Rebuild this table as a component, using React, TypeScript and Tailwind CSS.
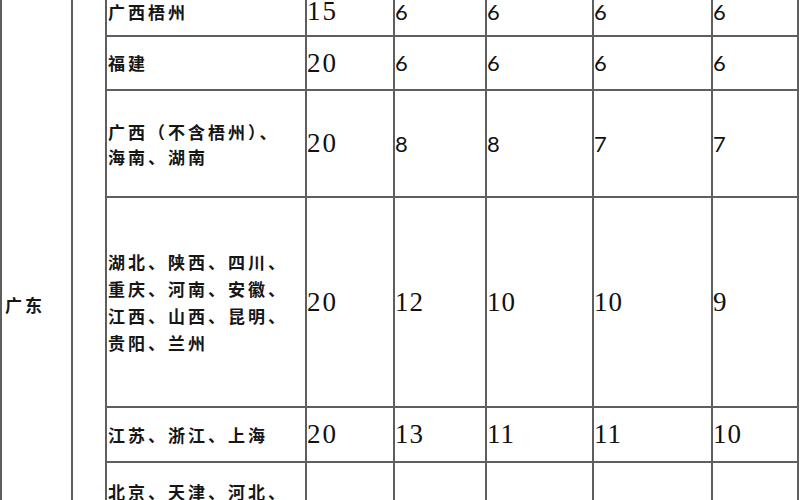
const cjk = "font-['Noto_Sans_CJK_SC',sans-serif] font-bold text-[17px] tracking-[3px] text-[#161616]";
const serifNum = "font-['Liberation_Serif',serif] text-[27px] tracking-[1px] text-[#111]";
const sansNum = "font-['Lato',sans-serif] text-[22px] text-[#111]";

type Row = {
  region: string[];
  leading: string;
  base: string;
  rates: string[];
  rateFont: 'serif' | 'sans';
  top?: boolean;
};

const rows: Row[] = [
  { region: ['广西梧州'], leading: 'leading-[22px]', base: '15', rates: ['6', '6', '6', '6'], rateFont: 'sans' },
  { region: ['福建'], leading: 'leading-[22px]', base: '20', rates: ['6', '6', '6', '6'], rateFont: 'sans' },
  {
    region: ['广西（不含梧州）、', '海南、湖南'],
    leading: 'leading-[25px]',
    base: '20',
    rates: ['8', '8', '7', '7'],
    rateFont: 'sans',
  },
  {
    region: ['湖北、陕西、四川、', '重庆、河南、安徽、', '江西、山西、昆明、', '贵阳、兰州'],
    leading: 'leading-[27px]',
    base: '20',
    rates: ['12', '10', '10', '9'],
    rateFont: 'serif',
  },
  { region: ['江苏、浙江、上海'], leading: 'leading-[22px]', base: '20', rates: ['13', '11', '11', '10'], rateFont: 'serif' },
  {
    region: ['北京、天津、河北、', '辽宁、吉林'],
    leading: 'leading-[26px]',
    base: '',
    rates: ['', '', '', ''],
    rateFont: 'serif',
    top: true,
  },
];

export default function App() {
  return (
    <div className="h-[500px] w-[800px] overflow-hidden bg-white">
      <div className="-mt-[12px] grid w-[799px] grid-cols-[69px_32px_198px_86px_90px_105px_117px_84px] grid-rows-[47px_52px_105px_208px_53px_100px] gap-[2px] bg-[#5e5e5e] px-[2px] pb-[2px]">
        <div className={`row-span-6 bg-white pl-[3px] pt-[307px] ${cjk} leading-[20px]`}>广东</div>
        <div className="row-span-6 bg-white" />
        {rows.map((row, i) => (
          <RateRow key={i} row={row} />
        ))}
      </div>
    </div>
  );
}

function RateRow({ row }: { row: Row }) {
  const align = row.top ? 'items-start pt-[16px]' : 'items-center';
  const rateFont = row.rateFont === 'serif' ? serifNum : sansNum;

  return (
    <>
      <div className={`flex bg-white pl-[1px] ${align} ${cjk} ${row.leading}`}>
        <p>
          {row.region.map((line, i) => (
            <span key={i} className="block whitespace-nowrap">
              {line}
            </span>
          ))}
        </p>
      </div>
      <div className={`flex items-center bg-white leading-none ${serifNum} tracking-[2px]`}>{row.base}</div>
      {row.rates.map((rate, i) => (
        <div key={i} className={`flex items-center bg-white leading-none ${rateFont}`}>
          {rate}
        </div>
      ))}
    </>
  );
}
